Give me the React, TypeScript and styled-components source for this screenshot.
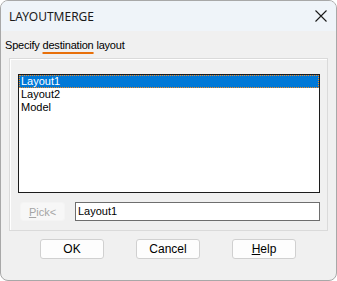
import React from 'react'
import styled, { createGlobalStyle } from 'styled-components';

const GlobalStyle = createGlobalStyle`
    html, body {
        margin: 0;
        padding: 0;
        background: #ffffff;
    }
`;

const Window = styled.div`
    width: 337px;
    height: 281px;
    box-sizing: border-box;
    border: 1px solid #a8a8a8;
    border-radius: 8px;
    overflow: hidden;
    background: #f0f0f0;
    display: flex;
    flex-direction: column;
    font-family: "Liberation Sans", Arial, sans-serif;
    font-size: 11px;
    color: #000;
`;

const TitleBar = styled.div`
    height: 30px;
    flex: 0 0 30px;
    background: #eff4f9;
    display: flex;
    align-items: center;
    justify-content: space-between;
    padding: 0 8px 0 8px;
`;

const Title = styled.span`
    font-family: "Noto Sans", "Open Sans", sans-serif;
    font-size: 12px;
    color: #1a1a1a;
    padding-top: 1px;
`;

const CloseIcon = styled.svg`
    width: 12px;
    height: 12px;
    margin-right: 1px;
`;

const Body = styled.div`
    flex: 1;
    display: flex;
    flex-direction: column;
    padding: 6px 8px 0 4px;
`;

const Prompt = styled.div`
    font-size: 11px;
    letter-spacing: -0.2px;
    line-height: 16px;
    height: 16px;
`;

const Marked = styled.span`
    text-decoration: underline;
    text-decoration-color: #e8700a;
    text-decoration-thickness: 2px;
    text-underline-offset: 3px;
`;

const Group = styled.div`
    margin: 5px 0 0 4px;
    height: 173px;
    box-sizing: border-box;
    border: 1px solid #dadada;
    box-shadow: inset 1px 1px 0 #ffffff;
    display: flex;
    flex-direction: column;
    padding: 15px 7px 0 8px;
`;

const ListBox = styled.div`
    height: 119px;
    box-sizing: border-box;
    border: 1px solid #1c1c1c;
    background: #ffffff;
    padding: 0;
`;

const ListItem = styled.div<{ $selected?: boolean }>`
    height: 13px;
    line-height: 13px;
    padding-left: 2px;
    box-sizing: border-box;
    background: ${p => p.$selected ? '#0078d7' : 'transparent'};
    color: ${p => p.$selected ? '#ffffff' : '#000000'};
    outline: ${p => p.$selected ? '1px dotted #f08a24' : 'none'};
    outline-offset: -1px;
`;

const PickRow = styled.div`
    display: flex;
    align-items: center;
    gap: 10px;
    margin-top: 9px;
    padding-left: 2px;
`;

const PickButton = styled.button`
    width: 45px;
    height: 19px;
    box-sizing: border-box;
    border: 1px solid #f4f4f4;
    border-radius: 3px;
    background: #f7f7f7;
    color: #a5a5a5;
    font-family: inherit;
    font-size: 11px;
    padding: 0;
    & u { text-decoration-color: #a5a5a5; }
`;

const NameInput = styled.div`
    flex: 1;
    height: 19px;
    box-sizing: border-box;
    border: 1px solid #6e6e6e;
    background: #ffffff;
    line-height: 17px;
    padding-left: 2px;
    font-size: 11px;
`;

const ButtonRow = styled.div`
    display: flex;
    gap: 32px;
    padding-left: 35px;
    margin-top: 8px;
`;

const DialogButton = styled.button`
    width: 64px;
    height: 20px;
    box-sizing: border-box;
    border: 1px solid #d0d0d0;
    border-radius: 3px;
    background: #fdfdfd;
    font-family: inherit;
    font-size: 12px;
    color: #000;
    padding: 0;
`;

export default function App() {
    return <>
        <GlobalStyle />
        <Window>
            <TitleBar>
                <Title>LAYOUTMERGE</Title>
                <CloseIcon viewBox="0 0 12 12">
                    <path d="M0.5 0.5 L11.5 11.5 M11.5 0.5 L0.5 11.5" stroke="#1a1a1a" strokeWidth="1.1" fill="none" />
                </CloseIcon>
            </TitleBar>
            <Body>
                <Prompt>Specify <Marked>destination</Marked> layout</Prompt>
                <Group>
                    <ListBox>
                        <ListItem $selected>Layout1</ListItem>
                        <ListItem>Layout2</ListItem>
                        <ListItem>Model</ListItem>
                    </ListBox>
                    <PickRow>
                        <PickButton disabled><u>P</u>ick&lt;</PickButton>
                        <NameInput>Layout1</NameInput>
                    </PickRow>
                </Group>
                <ButtonRow>
                    <DialogButton>OK</DialogButton>
                    <DialogButton>Cancel</DialogButton>
                    <DialogButton><u>H</u>elp</DialogButton>
                </ButtonRow>
            </Body>
        </Window>
    </>
}
